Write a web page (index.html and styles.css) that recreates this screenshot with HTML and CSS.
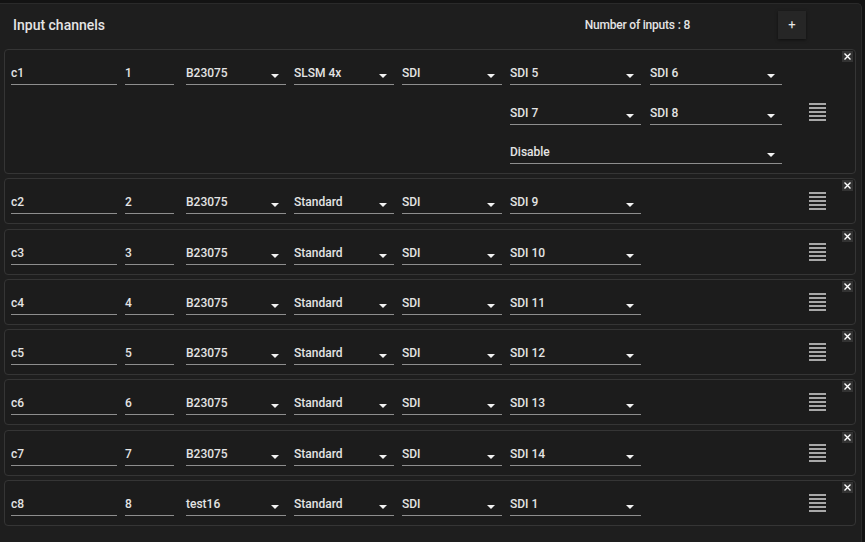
FILE: index.html
```html
<!DOCTYPE html>
<html lang="en">
<head>
    <meta charset="UTF-8" />
    <title>Input channels</title>
    <link rel="stylesheet" href="styles.css">
</head>
<body>
    <div class="panel">
        <div class="panel-head">
            <h2>Input channels</h2>
            <span class="count">Number of inputs : 8</span>
            <button class="btn-add">+</button>
        </div>

        <!-- channel c1 : quad link, four outputs + disable -->
        <div class="channel">
            <div class="field w-name"><span>c1</span></div>
            <div class="field w-num"><span>1</span></div>
            <div class="field select w-sel"><span>B23075</span></div>
            <div class="field select w-sel"><span>SLSM 4x</span></div>
            <div class="field select w-sel"><span>SDI</span></div>
            <div class="outputs">
                <div class="field select"><span>SDI 5</span></div>
                <div class="field select"><span>SDI 6</span></div>
                <div class="field select"><span>SDI 7</span></div>
                <div class="field select"><span>SDI 8</span></div>
                <div class="field select wide"><span>Disable</span></div>
            </div>
            <div class="handle"><i></i><i></i><i></i><i></i><i></i></div>
            <button class="btn-close"><svg width="7" height="7" viewBox="0 0 7 7"><path d="M0.5 0.5L6.5 6.5M6.5 0.5L0.5 6.5" stroke="#fff" stroke-width="1.4"/></svg></button>
        </div>

        <div class="channel">
            <div class="field w-name"><span>c2</span></div>
            <div class="field w-num"><span>2</span></div>
            <div class="field select w-sel"><span>B23075</span></div>
            <div class="field select w-sel"><span>Standard</span></div>
            <div class="field select w-sel"><span>SDI</span></div>
            <div class="outputs"><div class="field select"><span>SDI 9</span></div></div>
            <div class="handle"><i></i><i></i><i></i><i></i><i></i></div>
            <button class="btn-close"><svg width="7" height="7" viewBox="0 0 7 7"><path d="M0.5 0.5L6.5 6.5M6.5 0.5L0.5 6.5" stroke="#fff" stroke-width="1.4"/></svg></button>
        </div>

        <div class="channel">
            <div class="field w-name"><span>c3</span></div>
            <div class="field w-num"><span>3</span></div>
            <div class="field select w-sel"><span>B23075</span></div>
            <div class="field select w-sel"><span>Standard</span></div>
            <div class="field select w-sel"><span>SDI</span></div>
            <div class="outputs"><div class="field select"><span>SDI 10</span></div></div>
            <div class="handle"><i></i><i></i><i></i><i></i><i></i></div>
            <button class="btn-close"><svg width="7" height="7" viewBox="0 0 7 7"><path d="M0.5 0.5L6.5 6.5M6.5 0.5L0.5 6.5" stroke="#fff" stroke-width="1.4"/></svg></button>
        </div>

        <div class="channel">
            <div class="field w-name"><span>c4</span></div>
            <div class="field w-num"><span>4</span></div>
            <div class="field select w-sel"><span>B23075</span></div>
            <div class="field select w-sel"><span>Standard</span></div>
            <div class="field select w-sel"><span>SDI</span></div>
            <div class="outputs"><div class="field select"><span>SDI 11</span></div></div>
            <div class="handle"><i></i><i></i><i></i><i></i><i></i></div>
            <button class="btn-close"><svg width="7" height="7" viewBox="0 0 7 7"><path d="M0.5 0.5L6.5 6.5M6.5 0.5L0.5 6.5" stroke="#fff" stroke-width="1.4"/></svg></button>
        </div>

        <div class="channel">
            <div class="field w-name"><span>c5</span></div>
            <div class="field w-num"><span>5</span></div>
            <div class="field select w-sel"><span>B23075</span></div>
            <div class="field select w-sel"><span>Standard</span></div>
            <div class="field select w-sel"><span>SDI</span></div>
            <div class="outputs"><div class="field select"><span>SDI 12</span></div></div>
            <div class="handle"><i></i><i></i><i></i><i></i><i></i></div>
            <button class="btn-close"><svg width="7" height="7" viewBox="0 0 7 7"><path d="M0.5 0.5L6.5 6.5M6.5 0.5L0.5 6.5" stroke="#fff" stroke-width="1.4"/></svg></button>
        </div>

        <div class="channel">
            <div class="field w-name"><span>c6</span></div>
            <div class="field w-num"><span>6</span></div>
            <div class="field select w-sel"><span>B23075</span></div>
            <div class="field select w-sel"><span>Standard</span></div>
            <div class="field select w-sel"><span>SDI</span></div>
            <div class="outputs"><div class="field select"><span>SDI 13</span></div></div>
            <div class="handle"><i></i><i></i><i></i><i></i><i></i></div>
            <button class="btn-close"><svg width="7" height="7" viewBox="0 0 7 7"><path d="M0.5 0.5L6.5 6.5M6.5 0.5L0.5 6.5" stroke="#fff" stroke-width="1.4"/></svg></button>
        </div>

        <div class="channel">
            <div class="field w-name"><span>c7</span></div>
            <div class="field w-num"><span>7</span></div>
            <div class="field select w-sel"><span>B23075</span></div>
            <div class="field select w-sel"><span>Standard</span></div>
            <div class="field select w-sel"><span>SDI</span></div>
            <div class="outputs"><div class="field select"><span>SDI 14</span></div></div>
            <div class="handle"><i></i><i></i><i></i><i></i><i></i></div>
            <button class="btn-close"><svg width="7" height="7" viewBox="0 0 7 7"><path d="M0.5 0.5L6.5 6.5M6.5 0.5L0.5 6.5" stroke="#fff" stroke-width="1.4"/></svg></button>
        </div>

        <div class="channel">
            <div class="field w-name"><span>c8</span></div>
            <div class="field w-num"><span>8</span></div>
            <div class="field select w-sel"><span>test16</span></div>
            <div class="field select w-sel"><span>Standard</span></div>
            <div class="field select w-sel"><span>SDI</span></div>
            <div class="outputs"><div class="field select"><span>SDI 1</span></div></div>
            <div class="handle"><i></i><i></i><i></i><i></i><i></i></div>
            <button class="btn-close"><svg width="7" height="7" viewBox="0 0 7 7"><path d="M0.5 0.5L6.5 6.5M6.5 0.5L0.5 6.5" stroke="#fff" stroke-width="1.4"/></svg></button>
        </div>
    </div>
</body>
</html>
```

FILE: styles.css
```css
* {
    margin: 0;
    padding: 0;
    box-sizing: border-box;
}
body {
    font-family: Roboto, "Liberation Sans", sans-serif;
    background: #131313;
    color: #e4e4e4;
    height: 542px;
    overflow: hidden;
}
.panel {
    margin: 3px 3px 0 0;
    height: 539px;
    background: #1e1e1e;
    border-top: 1px solid #2a2a2a;
    border-right: 1px solid #2a2a2a;
    border-radius: 0 5px 0 0;
    padding: 0 5px 0 4px;
}
.panel-head {
    display: flex;
    align-items: center;
    height: 45px;
    padding: 0 0 4px 9px;
}
.panel-head h2 {
    font-size: 14px;
    font-weight: 500;
    flex: 1;
}
.count {
    font-size: 12px;
    font-weight: 500;
    letter-spacing: -0.2px;
}
.btn-add {
    width: 28px;
    height: 28px;
    margin: 0 50px 0 88px;
    background: #262626;
    border: none;
    color: #e8e8e8;
    font-size: 13px;
    font-family: inherit;
    box-shadow: 0 1px 3px rgba(0, 0, 0, 0.5);
}

/* one card per channel */
.channel {
    position: relative;
    display: flex;
    align-items: flex-start;
    border: 1px solid #353535;
    border-radius: 4px;
    background: #1c1c1c;
    padding: 9px 29px 9px 6px;
    margin-bottom: 4.3px;
}
.field {
    position: relative;
    height: 26px;
    padding-top: 6px;
    border-bottom: 1px solid #8e8e8e;
    font-size: 12px;
    font-weight: 500;
    line-height: 16px;
    margin-right: 8px;
    flex-shrink: 0;
}
.field.select::after {
    content: "";
    position: absolute;
    right: 7px;
    top: 15px;
    border-left: 4px solid transparent;
    border-right: 4px solid transparent;
    border-top: 4px solid #f2f2f2;
}
.w-name { width: 106px; }
.w-num { width: 49px; margin-right: 12px; }
.w-sel { width: 100px; }

.outputs {
    display: grid;
    grid-template-columns: 131px 132px;
    column-gap: 9px;
    row-gap: 13.5px;
    width: 272px;
}
.outputs .field {
    margin-right: 0;
}
.outputs .wide {
    grid-column: 1 / 3;
}
.handle {
    margin-left: auto;
    align-self: center;
    width: 17px;
    display: flex;
    flex-direction: column;
    gap: 2px;
}
.handle i {
    display: block;
    height: 2px;
    background: #a8a8a8;
}
.btn-close {
    position: absolute;
    top: 1px;
    right: 2px;
    width: 11px;
    height: 11px;
    background: #333;
    border: none;
    display: flex;
    align-items: center;
    justify-content: center;
}
```
